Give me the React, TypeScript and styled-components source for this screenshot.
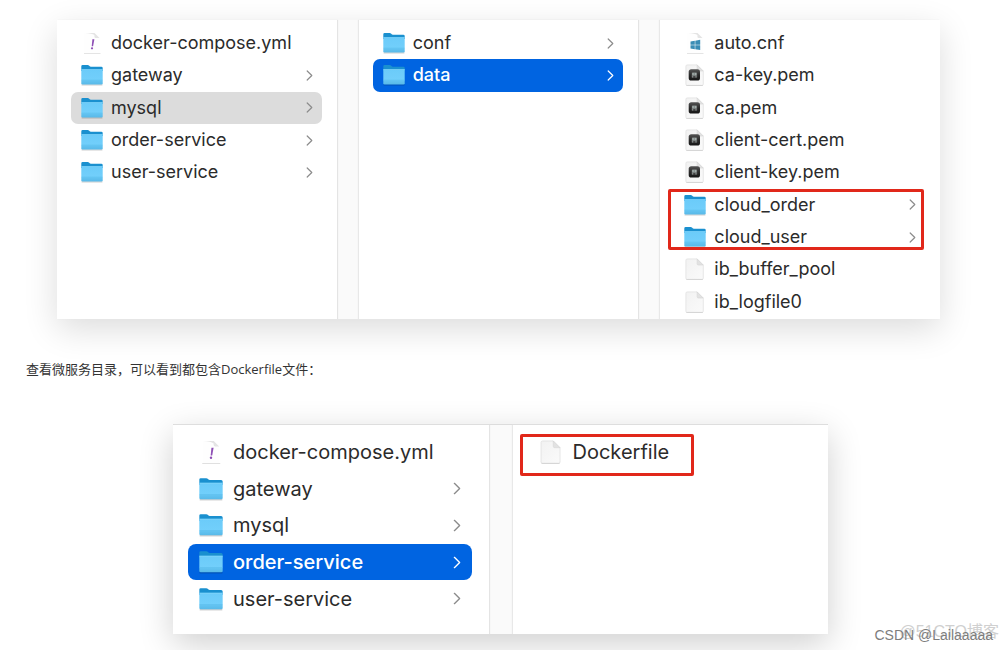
import React from "react";
import styled, { createGlobalStyle, css } from "styled-components";

const GlobalStyle = createGlobalStyle`
  *, *::before, *::after { box-sizing: border-box; }
  body { margin: 0; background: #fff; }
`;

type Size = "regular" | "large";
type Kind = "yml" | "folder" | "cnf" | "pem" | "file";
type Tone = "grey" | "blue";

interface Entry {
  name: string;
  kind: Kind;
  selected?: Tone;
}

const Page = styled.main`
  position: relative;
  display: flex;
  flex-direction: column;
  min-height: 100vh;
  padding: 20px 26px 16px;
  overflow: hidden;
`;

const Finder = styled.section<{ $size: Size }>`
  display: flex;
  background: #fafafa;
  ${({ $size }) =>
    $size === "regular"
      ? css`
          gap: 22px;
          margin: 0 42px 0 31px;
          box-shadow: 0 10px 32px rgba(0, 0, 0, 0.14);
        `
      : css`
          gap: 24px;
          margin: 0 154px 0 147px;
          border-top: 1px solid #dcdcdc;
          box-shadow: 0 10px 32px rgba(0, 0, 0, 0.19);
        `}
`;

const Column = styled.ul<{ $size: Size }>`
  flex: 1;
  display: grid;
  margin: 0;
  list-style: none;
  background: #fff;
  &:not(:last-child) {
    box-shadow: 1px 0 1px #e4e4e4;
  }
  &:not(:first-child) {
    box-shadow: -1px 0 1px #e8e8e8;
  }
  &:not(:first-child):not(:last-child) {
    box-shadow: -1px 0 1px #e8e8e8, 1px 0 1px #e4e4e4;
  }
  ${({ $size }) =>
    $size === "regular"
      ? css`
          height: 299px;
          padding: 7px 15px 1px 14px;
          grid-template-rows: repeat(9, 1fr);
        `
      : css`
          height: 209px;
          padding: 9px 17px 17px 15px;
          grid-template-rows: repeat(5, 1fr);
        `}
`;

const Cell = styled.li<{ $row: number }>`
  grid-area: ${({ $row }) => $row} / 1;
  display: flex;
`;

const Row = styled.button<{ $size: Size; $tone?: Tone }>`
  flex: 1;
  display: flex;
  align-items: center;
  border: 0;
  text-align: left;
  font-family: Inter, "Liberation Sans", sans-serif;
  font-weight: ${({ $tone }) => ($tone === "blue" ? 500 : 400)};
  color: ${({ $tone }) => ($tone === "blue" ? "#fff" : "#2b2b2b")};
  background: ${({ $tone }) =>
    $tone === "blue" ? "#0064e1" : $tone === "grey" ? "#dcdcdc" : "transparent"};
  ${({ $size }) =>
    $size === "regular"
      ? css`
          gap: 8px;
          padding: 0 9px 0 10px;
          border-radius: 7px;
          font-size: 18px;
          line-height: 24px;
        `
      : css`
          gap: 10px;
          padding: 0 11px;
          border-radius: 8px;
          font-size: 20px;
          line-height: 28px;
        `}
`;

const Name = styled.span`
  flex: 1;
  white-space: nowrap;
`;

const Icon = styled.svg<{ $size: Size }>`
  flex: none;
  width: ${({ $size }) => ($size === "regular" ? 22 : 24)}px;
  height: ${({ $size }) => ($size === "regular" ? 22 : 24)}px;
`;

const Chevron = styled.svg<{ $size: Size }>`
  flex: none;
  width: ${({ $size }) => ($size === "regular" ? 7 : 8)}px;
  height: ${({ $size }) => ($size === "regular" ? 11 : 13)}px;
`;

const Marker = styled.li<{ $row: number; $span: number; $size: Size }>`
  z-index: 1;
  grid-area: ${({ $row }) => $row} / 1 / span ${({ $span }) => $span};
  border: 3px solid #e1281a;
  border-radius: 2px;
  pointer-events: none;
  ${({ $size }) =>
    $size === "regular"
      ? css`
          margin: 0 1px 3px -6px;
        `
      : css`
          width: 174px;
          margin: 0 0 -5px -8px;
        `}
`;

const Caption = styled.p`
  margin: 40px 0 45px;
  font: 13px/20px "Open Sans", "Noto Sans CJK SC", sans-serif;
  color: #333;
`;

const SiteMark = styled.span`
  position: absolute;
  right: 9px;
  bottom: 6px;
  font: 16px/24px "Liberation Sans", "Noto Sans CJK SC", sans-serif;
  color: #d0d0d0;
`;

const AuthorMark = styled.span`
  position: absolute;
  right: 15px;
  bottom: 5px;
  font: 14px/20px "Liberation Sans", sans-serif;
  color: #7d7d7d;
`;

const Gradients = () => (
  <svg width="0" height="0" style={{ position: "absolute" }} aria-hidden="true">
    <defs>
      <linearGradient id="front" x1="0" y1="0" x2="0" y2="1">
        <stop offset="0" stopColor="#6bcbf9" />
        <stop offset="0.72" stopColor="#72cffb" />
        <stop offset="0.78" stopColor="#62c2f0" />
        <stop offset="1" stopColor="#58b9e8" />
      </linearGradient>
      <linearGradient id="paper" x1="0" y1="0" x2="1" y2="1">
        <stop offset="0" stopColor="#f2f2f2" />
        <stop offset="1" stopColor="#fafafa" />
      </linearGradient>
      <linearGradient id="badge" x1="0" y1="0" x2="0" y2="1">
        <stop offset="0" stopColor="#555" />
        <stop offset="0.5" stopColor="#2b2b2b" />
        <stop offset="1" stopColor="#161616" />
      </linearGradient>
    </defs>
  </svg>
);

const FolderArt = () => (
  <>
    <path d="M.6 20.4h20.8v1H.6z" fill="#000" opacity=".25" />
    <path
      d="M.3 2.4Q.3 1.1 1.6 1.1h5.1q.8 0 1.3.5l.7.7q.4.4 1.1.4h10.5q1.4 0 1.4 1.4V7H.3z"
      fill="#1a90cf"
    />
    <path d="M.3 5.2h21.4v14q0 1.3-1.3 1.3H1.6Q.3 20.5.3 19.2z" fill="url(#front)" />
    <path d="M.3 5.3h21.4v.7H.3z" fill="#8bd8fb" opacity=".7" />
    <path d="M.5 16.2h21" stroke="#52b5e6" strokeWidth=".5" />
  </>
);

const WhitePage = () => (
  <>
    <path d="M3.5.8h10l5 5V21h-15z" fill="#fefefe" />
    <path d="M4 .9h9.500l5 5h-3.600q-1.500 0-1.500-1.500V3.100Q11 1.200 4 .9z" fill="#e4e4e4" />
    <path d="M3 21.600h16.500" stroke="#d9d9d9" strokeWidth=".8" />
  </>
);

const GreyPage = () => (
  <>
    <path
      d="M3.2.9h9.900l6.200 6.200v13q0 1.300-1.300 1.300H3.200q-1.300 0-1.300-1.300V2.200Q1.900.9 3.200.9z"
      fill="url(#paper)"
      stroke="#dedede"
      strokeWidth=".7"
    />
    <path d="M2.300 21.500h16.600" stroke="#cfcfcf" strokeWidth=".7" />
    <path d="M13.100.9v4.900q0 1.300 1.300 1.300h4.900z" fill="#e2e2e2" stroke="#d2d2d2" strokeWidth=".5" />
  </>
);

const art: Record<Kind, React.ReactNode> = {
  folder: <FolderArt />,
  file: <GreyPage />,
  yml: (
    <>
      <WhitePage />
      <path d="M11.400 7.200h2l-1.300 7h-1.400z" fill="#8e4fb5" />
      <circle cx="11" cy="16.300" r="1.100" fill="#8e4fb5" />
    </>
  ),
  cnf: (
    <>
      <WhitePage />
      <path
        d="M6.500 9.500l4.300-.7v3.900H6.500zM11.300 8.700l4.900-.9v4.900h-4.900zM6.500 13.200h4.300v4L6.500 16.500zM11.300 13.200h4.900V18l-4.900-.8z"
        fill="#3a8db5"
      />
    </>
  ),
  pem: (
    <>
      <GreyPage />
      <rect x="4.700" y="5.200" width="11.300" height="11.300" rx="2.600" fill="url(#badge)" />
      <rect x="7.300" y="8" width="6" height="5.800" rx=".8" fill="#444" />
      <path d="M8.200 8.700h4.400v2.800H8.200z" fill="#aab4b2" />
      <path d="M8.700 11.500v2.100M12 11.500v2.100" stroke="#98a2a0" strokeWidth=".9" />
      <path d="M9.500 10h1.700" stroke="#4c5554" strokeWidth=".8" />
    </>
  ),
};

interface FinderColumnProps {
  label: string;
  size: Size;
  entries: Entry[];
  marked?: { row: number; span: number };
}

const FinderColumn = ({ label, size, entries, marked }: FinderColumnProps) => (
  <Column $size={size} aria-label={label}>
    {entries.map(({ name, kind, selected }, index) => (
      <Cell key={name} $row={index + 1}>
        <Row type="button" $size={size} $tone={selected}>
          <Icon $size={size} viewBox="0 0 22 22" aria-hidden="true">
            {art[kind]}
          </Icon>
          <Name>{name}</Name>
          {kind === "folder" && (
            <Chevron $size={size} viewBox="0 0 7 11" aria-hidden="true">
              <path
                d="M1.200 1l4.600 4.500L1.200 10"
                fill="none"
                stroke={selected === "blue" ? "#fff" : "#8c8c8c"}
                strokeWidth="1.200"
                strokeLinecap="round"
                strokeLinejoin="round"
              />
            </Chevron>
          )}
        </Row>
      </Cell>
    ))}
    {marked && <Marker $size={size} $row={marked.row} $span={marked.span} aria-hidden="true" />}
  </Column>
);

const projectEntries = (selectedName: string, tone: Tone): Entry[] => [
  { name: "docker-compose.yml", kind: "yml" },
  ...["gateway", "mysql", "order-service", "user-service"].map(
    (name): Entry => ({
      name,
      kind: "folder",
      selected: name === selectedName ? tone : undefined,
    })
  ),
];

const mysqlEntries: Entry[] = [
  { name: "conf", kind: "folder" },
  { name: "data", kind: "folder", selected: "blue" },
];

const dataEntries: Entry[] = [
  { name: "auto.cnf", kind: "cnf" },
  { name: "ca-key.pem", kind: "pem" },
  { name: "ca.pem", kind: "pem" },
  { name: "client-cert.pem", kind: "pem" },
  { name: "client-key.pem", kind: "pem" },
  { name: "cloud_order", kind: "folder" },
  { name: "cloud_user", kind: "folder" },
  { name: "ib_buffer_pool", kind: "file" },
  { name: "ib_logfile0", kind: "file" },
];

export default function App() {
  return (
    <>
      <GlobalStyle />
      <Gradients />
      <Page>
        <Finder $size="regular">
          <FinderColumn label="project" size="regular" entries={projectEntries("mysql", "grey")} />
          <FinderColumn label="mysql" size="regular" entries={mysqlEntries} />
          <FinderColumn
            label="data"
            size="regular"
            entries={dataEntries}
            marked={{ row: 6, span: 2 }}
          />
        </Finder>
        <Caption>查看微服务目录，可以看到都包含Dockerfile文件：</Caption>
        <Finder $size="large">
          <FinderColumn
            label="project"
            size="large"
            entries={projectEntries("order-service", "blue")}
          />
          <FinderColumn
            label="order-service"
            size="large"
            entries={[{ name: "Dockerfile", kind: "file" }]}
            marked={{ row: 1, span: 1 }}
          />
        </Finder>
        <SiteMark>@51CTO博客</SiteMark>
        <AuthorMark>CSDN @Lailaaaaa</AuthorMark>
      </Page>
    </>
  );
}
